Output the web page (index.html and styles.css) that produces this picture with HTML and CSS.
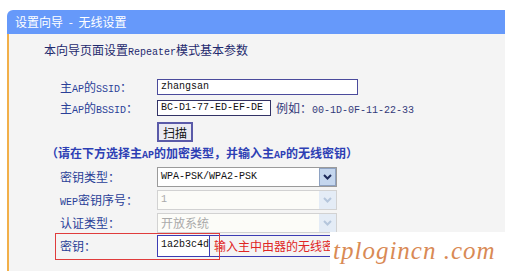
FILE: index.html
```html
<!DOCTYPE html>
<html lang="zh-CN">
<head>
  <meta charset="UTF-8" />
  <title>设置向导 - 无线设置</title>
  <link rel="stylesheet" href="styles.css">
</head>
<body>
  <div class="panel">
    <div class="panel-title">设置向导 - 无线设置</div>
    <div class="panel-body">
      <p class="intro">本向导页面设置<span class="en">Repeater</span>模式基本参数</p>

      <div class="form">
        <div class="row">
          <label class="label">主<span class="en">AP</span>的<span class="en">SSID</span>：</label>
          <div class="input wide">zhangsan</div>
        </div>
        <div class="row">
          <label class="label">主<span class="en">AP</span>的<span class="en">BSSID</span>：</label>
          <div class="input mac">BC-D1-77-ED-EF-DE</div>
          <span class="hint">例如：<span class="en">00-1D-0F-11-22-33</span></span>
        </div>
        <div class="row row-btn">
          <button class="btn">扫描</button>
        </div>
        <p class="note">（请在下方选择主<span class="en">AP</span>的加密类型，并输入主<span class="en">AP</span>的无线密钥）</p>
        <div class="row row-sel">
          <label class="label">密钥类型：</label>
          <div class="select">
            <span class="value en">WPA-PSK/WPA2-PSK</span>
            <span class="arrow"><svg width="9" height="6" viewBox="0 0 9 6"><path d="M1 1l3.5 3.5L8 1" fill="none" stroke="currentColor" stroke-width="2"/></svg></span>
          </div>
        </div>
        <div class="row row-sel">
          <label class="label"><span class="en">WEP</span>密钥序号：</label>
          <div class="select disabled">
            <span class="value en">1</span>
            <span class="arrow"><svg width="9" height="6" viewBox="0 0 9 6"><path d="M1 1l3.5 3.5L8 1" fill="none" stroke="currentColor" stroke-width="2"/></svg></span>
          </div>
        </div>
        <div class="row row-sel">
          <label class="label">认证类型：</label>
          <div class="select disabled">
            <span class="value">开放系统</span>
            <span class="arrow"><svg width="9" height="6" viewBox="0 0 9 6"><path d="M1 1l3.5 3.5L8 1" fill="none" stroke="currentColor" stroke-width="2"/></svg></span>
          </div>
        </div>
        <div class="row row-sel row-key">
          <label class="label">密钥：</label>
          <div class="key-box">
            <div class="input key">1a2b3c4d</div>
            <span class="key-hint">输入主中由器的无线密钥</span>
          </div>
        </div>
      </div>

      <div class="watermark">tplogincn .com</div>
    </div>
  </div>
</body>
</html>
```

FILE: styles.css
```css
* {
  margin: 0;
  padding: 0;
  box-sizing: border-box;
}

body {
  background: #fff;
  font-family: "Noto Sans CJK SC", sans-serif;
  font-size: 12px;
  color: #24338c;
  padding-top: 10px;
  overflow: hidden;
}

.en {
  font-family: "Liberation Mono", monospace;
  font-size: 10px;
}

.panel {
  margin-left: 7px;
}

.panel-title {
  height: 24px;
  line-height: 24px;
  background: #6699fa;
  color: #fff;
  padding-left: 8px;
  border-top-left-radius: 6px;
  font-size: 12px;
  word-spacing: 3px;
}

.panel-body {
  position: relative;
  height: 240px;
  overflow: hidden;
  background: #f4f4f4;
  border-left: 2px solid #f2b04a;
}

.intro {
  padding: 6px 0 0 35px;
  line-height: 20px;
  color: #1f2a6e;
}

.form {
  margin-top: 13px;
  padding-left: 51px;
}

.row {
  display: flex;
  align-items: center;
  height: 21px;
}

.row-btn {
  height: 25px;
  padding-top: 2px;
  padding-left: 97px;
}

.row-sel {
  height: 23px;
}

.label {
  width: 97px;
  flex-shrink: 0;
  color: #2a3f98;
}

.input {
  height: 16px;
  line-height: 14px;
  background: #fff;
  border: 1px solid #4b4b9c;
  padding-left: 3px;
  font-family: "Liberation Mono", monospace;
  font-size: 10px;
  color: #111;
}

.wide {
  width: 201px;
}

.mac {
  width: 114px;
  border-color: #333366;
}

.hint {
  margin-left: 5px;
  color: #333a7a;
}

.btn {
  height: 20px;
  padding: 0 4px;
  background: #eaeaf2;
  border: 2px solid #5a5aa8;
  font-family: "Noto Sans CJK SC", sans-serif;
  font-size: 12px;
  color: #111;
}

.note {
  margin-left: -14px;
  height: 22px;
  line-height: 20px;
  font-weight: bold;
  color: #2d3fb4;
}

.select {
  width: 180px;
  height: 20px;
  display: flex;
  align-items: center;
  justify-content: space-between;
  background: #fff;
  border: 1px solid #9a9a9a;
  padding-left: 3px;
  color: #111;
}

.select .value {
  line-height: 18px;
}

.arrow {
  width: 17px;
  height: 18px;
  display: flex;
  align-items: center;
  justify-content: center;
  background: #c4d6ee;
  border: 1px solid #8ea2c2;
  color: #1d2a5a;
}

.select.disabled {
  border-color: #d2d2d2;
  background: #fcfcf8;
  color: #aaa;
}

.select.disabled .arrow {
  background: #e4ecf6;
  border-color: #e4ecf6;
  color: #b5c6dc;
}

.row-key {
  position: relative;
}

.row-key::before {
  content: "";
  position: absolute;
  left: -5px;
  top: -1px;
  width: 163px;
  height: 25px;
  border: 1px solid #e03c3c;
}

.key-box {
  display: flex;
  align-items: center;
  height: 22px;
  width: 190px;
  border: 1px solid #3c3cb4;
}

.key {
  width: 89px;
  height: 20px;
  line-height: 18px;
  border: none;
  border-right: 1px solid #3c3cb4;
}

.key-hint {
  margin-left: 4px;
  white-space: nowrap;
  color: #e02424;
}

.watermark {
  position: absolute;
  left: 321px;
  top: 198px;
  width: 180px;
  height: 50px;
  background: #fff;
  padding-left: 3px;
  font-family: "Liberation Serif", serif;
  font-style: italic;
  font-size: 25px;
  letter-spacing: 1px;
  line-height: 38px;
  color: #d98a55;
  white-space: nowrap;
}
```
